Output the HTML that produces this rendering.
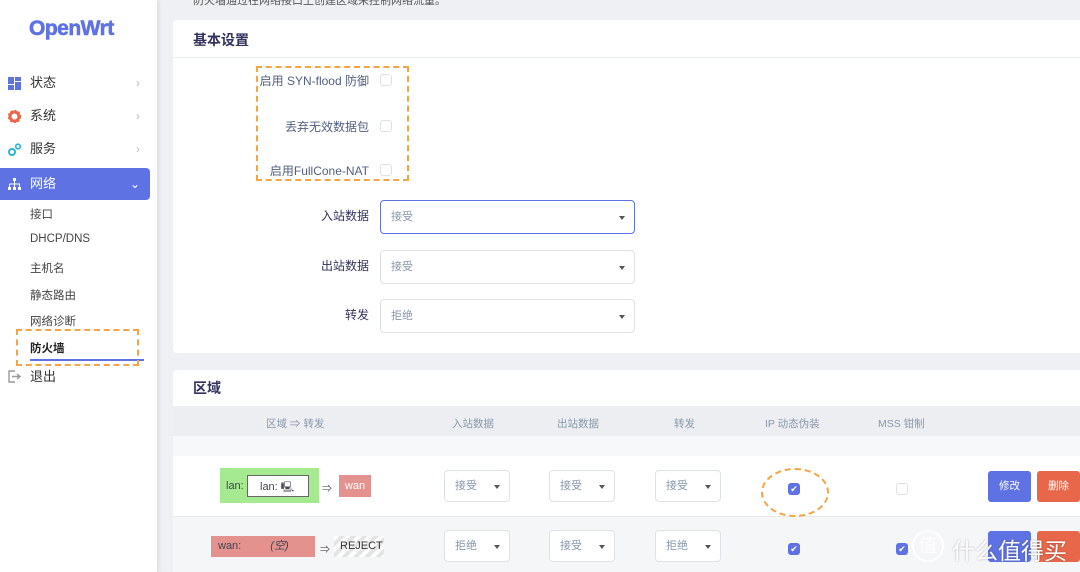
<!DOCTYPE html>
<html><head><meta charset="utf-8"><style>
*{box-sizing:border-box;margin:0;padding:0}
html,body{width:1080px;height:572px;overflow:hidden}
body{background:#eef0f4;font-family:"Liberation Sans","Noto Sans CJK SC",sans-serif;position:relative;color:#32325d}
.abs{position:absolute}
#side{left:0;top:0;width:157px;height:572px;background:#fff;box-shadow:2px 0 4px rgba(0,0,0,.08)}
.logo{left:29px;top:17px;font-size:21px;font-weight:bold;color:#5e72e4;letter-spacing:-.5px;-webkit-text-stroke:.6px #5e72e4}
.mi{left:0;width:150px;height:32px;font-size:13px;color:#333;line-height:32px;padding-left:30px}
.mi .ar{position:absolute;right:10px;top:0;color:#bbb;font-size:12px}
.sub{left:30px;font-size:11.5px;color:#444}
.card{left:173px;width:920px;background:#fff;border-radius:4px}
h3{font-size:14px;font-weight:bold;color:#32325d}
.lbl{font-size:12px;color:#525f7f;text-align:right;width:200px}
.cb{width:12px;height:12px;border:1px solid #dee2e6;border-radius:3px;background:#fff}
.cbc{width:12px;height:12px;border-radius:3px;background:#5e72e4;color:#fff;font-size:9px;line-height:12px;text-align:center}
.sel{border:1px solid #dee2e6;border-radius:4px;background:#fff;font-size:11px;color:#8898aa;padding-left:10px}
.sel:after{content:"";position:absolute;right:9px;top:50%;margin-top:-1px;border-left:3px solid transparent;border-right:3px solid transparent;border-top:4px solid #555}
.th{font-size:10.5px;color:#8898aa;top:416px}
.btn{color:#fff;font-size:10.5px;text-align:center;border-radius:3px}
</style></head><body>
<div class="abs" style="left:193px;top:-8px;font-size:11px;color:#555">防火墙通过在网络接口上创建区域来控制网络流量。</div>

<div id="side" class="abs">
<div class="abs logo">OpenWrt</div>
<div class="abs mi" style="top:67px"><svg class="abs" style="left:8px;top:10px" width="13" height="13"><rect x="0" y="0" width="6" height="7" fill="#5e72e4"/><rect x="7" y="0" width="6" height="4" fill="#5e72e4"/><rect x="0" y="8" width="6" height="5" fill="#5e72e4"/><rect x="7" y="5" width="6" height="8" fill="#5e72e4"/></svg>状态<span class="ar">›</span></div>
<div class="abs mi" style="top:100px"><svg class="abs" style="left:8px;top:10px" width="13" height="13"><circle cx="6.5" cy="6.5" r="4.5" fill="none" stroke="#e8674a" stroke-width="3"/><circle cx="6.5" cy="6.5" r="6" fill="none" stroke="#e8674a" stroke-width="1.5" stroke-dasharray="2 2"/></svg>系统<span class="ar">›</span></div>
<div class="abs mi" style="top:133px"><svg class="abs" style="left:8px;top:10px" width="13" height="13"><circle cx="4" cy="9" r="3" fill="none" stroke="#2bb3e0" stroke-width="2"/><circle cx="10" cy="3.5" r="2.3" fill="none" stroke="#2bb3e0" stroke-width="1.6"/></svg>服务<span class="ar">›</span></div>
<div class="abs mi" style="top:168px;background:#5e72e4;color:#fff;border-radius:0 4px 4px 0"><svg class="abs" style="left:8px;top:10px" width="13" height="12"><rect x="5" y="0" width="3" height="3" fill="#fff"/><path d="M6.5 3V6M1.5 6H11.5V9M1.5 6V9M6.5 6V9" stroke="#fff" fill="none"/><rect x="0" y="9" width="3" height="3" fill="#fff"/><rect x="5" y="9" width="3" height="3" fill="#fff"/><rect x="10" y="9" width="3" height="3" fill="#fff"/></svg>网络<span class="ar" style="color:#fff">⌄</span></div>
<div class="abs sub" style="top:206px">接口</div>
<div class="abs sub" style="top:233px">DHCP/DNS</div>
<div class="abs sub" style="top:260px">主机名</div>
<div class="abs sub" style="top:287px">静态路由</div>
<div class="abs sub" style="top:313px">网络诊断</div>
<div class="abs sub" style="top:340px;color:#222;font-weight:bold">防火墙</div>
<div class="abs" style="left:30px;top:359px;width:114px;height:2px;background:#5e72e4"></div>
<div class="abs" style="left:16px;top:329px;width:123px;height:37px;border:2px dashed #f7a445"></div>
<div class="abs mi" style="top:361px"><svg class="abs" style="left:8px;top:9px" width="13" height="13"><path d="M7 1H1V12H7" stroke="#999" fill="none" stroke-width="1.4"/><path d="M4 6.5H12M9 4L12 6.5L9 9" stroke="#999" fill="none" stroke-width="1.4"/></svg>退出</div>
</div>

<div class="abs card" style="top:20px;height:333px">
<h3 class="abs" style="left:20px;top:10px">基本设置</h3>
<div class="abs" style="left:0;top:37px;width:920px;height:1px;background:#e9ecef"></div>
</div>
<div class="abs lbl" style="left:169px;top:72px">启用 SYN-flood 防御</div>
<div class="abs lbl" style="left:169px;top:118px">丢弃无效数据包</div>
<div class="abs lbl" style="left:169px;top:162px">启用FullCone-NAT</div>
<div class="abs cb" style="left:380px;top:74px"></div>
<div class="abs cb" style="left:380px;top:120px"></div>
<div class="abs cb" style="left:380px;top:164px"></div>
<div class="abs" style="left:256px;top:66px;width:153px;height:115px;border:2px dashed #f7a445"></div>
<div class="abs lbl" style="left:169px;top:207px;color:#32325d">入站数据</div>
<div class="abs lbl" style="left:169px;top:257px;color:#32325d">出站数据</div>
<div class="abs lbl" style="left:169px;top:306px;color:#32325d">转发</div>
<div class="abs sel" style="left:380px;top:200px;width:255px;height:34px;line-height:32px;border-color:#5e72e4">接受</div>
<div class="abs sel" style="left:380px;top:250px;width:255px;height:34px;line-height:32px">接受</div>
<div class="abs sel" style="left:380px;top:299px;width:255px;height:34px;line-height:32px">拒绝</div>

<div class="abs card" style="top:370px;height:202px;background:#fff">
<h3 class="abs" style="left:20px;top:8px">区域</h3>
</div>
<div class="abs" style="left:173px;top:406px;width:907px;height:30px;background:#eceef2"></div>
<div class="abs" style="left:173px;top:436px;width:907px;height:20px;background:#f7f8fa"></div>
<div class="abs" style="left:173px;top:516px;width:907px;height:56px;background:#f5f6f8;border-top:1px solid #e6e8ec"></div>
<div class="abs th" style="left:266px">区域 ⇒ 转发</div>
<div class="abs th" style="left:452px">入站数据</div>
<div class="abs th" style="left:557px">出站数据</div>
<div class="abs th" style="left:674px">转发</div>
<div class="abs th" style="left:765px">IP 动态伪装</div>
<div class="abs th" style="left:878px">MSS 钳制</div>

<div class="abs" style="left:220px;top:468px;width:99px;height:35px;background:#a5ea90"></div>
<div class="abs" style="left:226px;top:480px;font-size:11px;color:#445">lan:</div>
<div class="abs" style="left:247px;top:475px;width:62px;height:22px;background:#fff;border:1px solid #666;font-size:11px;color:#445;padding:4px 0 0 12px">lan: <span style="font-size:10px">🖳</span></div>
<div class="abs" style="left:322px;top:480px;font-size:10px;color:#555">⇒</div>
<div class="abs" style="left:339px;top:475px;width:32px;height:22px;background:#e3928e;font-size:11px;color:#fff;text-align:center;line-height:22px">wan</div>
<div class="abs sel" style="left:444px;top:470px;width:66px;height:32px;line-height:30px">接受</div>
<div class="abs sel" style="left:549px;top:470px;width:66px;height:32px;line-height:30px">接受</div>
<div class="abs sel" style="left:655px;top:470px;width:66px;height:32px;line-height:30px">接受</div>
<div class="abs cbc" style="left:788px;top:483px">✔</div>
<div class="abs" style="left:761px;top:468px;width:68px;height:49px;border:2px dashed #f7a445;border-radius:50%"></div>
<div class="abs cb" style="left:896px;top:483px"></div>
<div class="abs btn" style="left:988px;top:471px;width:43px;height:31px;line-height:31px;background:#5e72e4">修改</div>
<div class="abs btn" style="left:1037px;top:471px;width:43px;height:31px;line-height:31px;background:#e8674a">删除</div>

<div class="abs" style="left:211px;top:536px;width:104px;height:21px;background:#e3928e;font-size:11px;color:#445;line-height:21px;padding-left:7px">wan: <i style="margin-left:26px">(空)</i></div>
<div class="abs" style="left:320px;top:541px;font-size:10px;color:#555">⇒</div>
<div class="abs" style="left:334px;top:536px;width:50px;height:21px;background:repeating-linear-gradient(135deg,#fff 0 4px,#e4e4e4 4px 8px);font-size:11px;color:#333;line-height:21px;padding-left:6px">REJECT</div>
<div class="abs sel" style="left:444px;top:530px;width:66px;height:32px;line-height:30px">拒绝</div>
<div class="abs sel" style="left:549px;top:530px;width:66px;height:32px;line-height:30px">接受</div>
<div class="abs sel" style="left:655px;top:530px;width:66px;height:32px;line-height:30px">拒绝</div>
<div class="abs cbc" style="left:788px;top:543px">✔</div>
<div class="abs cbc" style="left:896px;top:543px">✔</div>
<div class="abs btn" style="left:988px;top:531px;width:43px;height:31px;background:#5e72e4"></div>
<div class="abs btn" style="left:1037px;top:531px;width:43px;height:31px;background:#e8674a"></div>
<div class="abs" style="left:912px;top:530px;width:32px;height:32px;border-radius:50%;border:2px solid rgba(255,255,255,.9);color:#fff;font-size:18px;text-align:center;line-height:28px">值</div>
<div class="abs" style="left:952px;top:532px;color:#fff;font-size:23px;text-shadow:0 0 2px rgba(0,0,0,.3)">什么值得买</div>
</body></html>
